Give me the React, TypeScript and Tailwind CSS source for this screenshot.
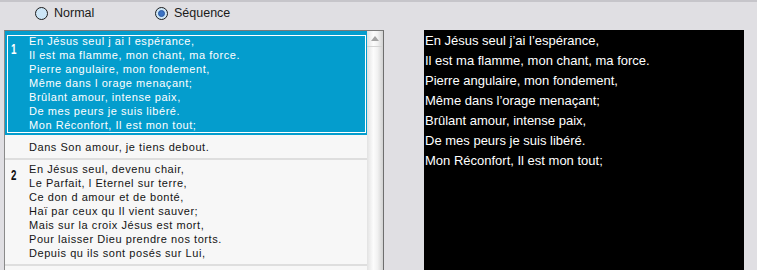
import React from "react";

const v1 = [
  "En Jésus seul j ai l espérance,",
  "Il est ma flamme, mon chant, ma force.",
  "Pierre angulaire, mon fondement,",
  "Même dans l orage menaçant;",
  "Brûlant amour, intense paix,",
  "De mes peurs je suis libéré.",
  "Mon Réconfort, Il est mon tout;",
];
const v2 = [
  "En Jésus seul, devenu chair,",
  "Le Parfait, l Eternel sur terre,",
  "Ce don d amour et de bonté,",
  "Haï par ceux qu Il vient sauver;",
  "Mais sur la croix Jésus est mort,",
  "Pour laisser Dieu prendre nos torts.",
  "Depuis qu ils sont posés sur Lui,",
];
const preview = [
  "En Jésus seul j’ai l’espérance,",
  "Il est ma flamme, mon chant, ma force.",
  "Pierre angulaire, mon fondement,",
  "Même dans l’orage menaçant;",
  "Brûlant amour, intense paix,",
  "De mes peurs je suis libéré.",
  "Mon Réconfort, Il est mon tout;",
];

function Radio({ checked, label }: { checked?: boolean; label: string }) {
  return (
    <div className="flex items-center gap-[6px] h-[13px]">
      <span className="w-[13px] h-[13px] rounded-full border border-[#1c1c1c] bg-[#cde6f7] flex items-center justify-center shrink-0">
        {checked && <span className="w-[7px] h-[7px] rounded-full bg-[#3a72c4] border border-[#2a58a0]" />}
      </span>
      <span className="text-[12.5px] leading-[13px] text-[#1a1a1a] font-['Liberation_Sans',sans-serif]">{label}</span>
    </div>
  );
}

function Num({ n, white }: { n: string; white?: boolean }) {
  return (
    <div className="w-[21px] shrink-0 pl-[3px]">
      <span
        className={`inline-block mt-[1px] origin-left scale-x-[0.65] font-['Liberation_Sans',sans-serif] font-bold text-[15px] leading-[15px] ${
          white ? "text-white" : "text-[#111]"
        }`}
      >
        {n}
      </span>
    </div>
  );
}

function Lines({ lines, white }: { lines: string[]; white?: boolean }) {
  return (
    <div
      className={`font-['Liberation_Sans',sans-serif] text-[11px] leading-[14px] tracking-[0.55px] whitespace-nowrap ${
        white ? "text-white" : "text-[#141414]"
      }`}
    >
      {lines.map((l, i) => (
        <div key={i}>{l}</div>
      ))}
    </div>
  );
}

export default function App() {
  return (
    <div className="w-[757px] h-[270px] overflow-hidden bg-[#e0dfe3] flex flex-col">
      <div className="h-[2px] bg-[#c6c5ca] shrink-0" />
      <div className="h-[28px] shrink-0 flex items-start pt-[5px] pl-[35px]">
        <div className="w-[120px]">
          <Radio label="Normal" />
        </div>
        <Radio checked label="Séquence" />
      </div>
      <div className="flex flex-1 min-h-0">
        <div className="ml-[4px] w-[380px] border-l border-t border-r border-l-[#8a8a8a] border-t-[#7a7a7a] border-r-[#6e6e6e] flex bg-[#f7f7f7]">
          <div className="w-[362px] flex flex-col overflow-hidden">
            <div className="bg-[#049dcd] pt-[4px] pb-[2px] pl-[2px] pr-[1px] shrink-0">
              <div className="border border-white h-[98px] flex overflow-hidden">
                <Num n="1" white />
                <div className="-mt-[2px]">
                  <Lines lines={v1} white />
                </div>
              </div>
            </div>
            <div className="pt-[5px] pb-[4px] pl-[3px] flex shrink-0">
              <div className="w-[21px] shrink-0" />
              <Lines lines={["Dans Son amour, je tiens debout."]} />
            </div>
            <div className="h-[2px] bg-[#dedede] shrink-0" />
            <div className="pt-[2px] pb-[4px] pl-[3px] flex shrink-0">
              <Num n="2" />
              <Lines lines={v2} />
            </div>
            <div className="h-[2px] bg-[#dedede] shrink-0" />
            <div className="flex-1" />
          </div>
          <div className="w-[16px] shrink-0 flex flex-col bg-[linear-gradient(to_right,#e2e2e2,#fcfcfc_40%,#f2f2f2_65%,#d2d2d2)]">
            <div className="h-[16px] border-b border-[#d4d4d4] flex items-center justify-center">
              <svg width="8" height="5" viewBox="0 0 8 5">
                <polygon points="4,0 8,5 0,5" fill="#a4a4a4" />
              </svg>
            </div>
          </div>
        </div>
        <div className="ml-[40px] w-[320px] bg-black pt-[1px] pl-[1px]">
          <div className="font-['Liberation_Sans',sans-serif] text-[13px] leading-[20px] text-white whitespace-nowrap">
            {preview.map((l, i) => (
              <div key={i}>{l}</div>
            ))}
          </div>
        </div>
      </div>
    </div>
  );
}
